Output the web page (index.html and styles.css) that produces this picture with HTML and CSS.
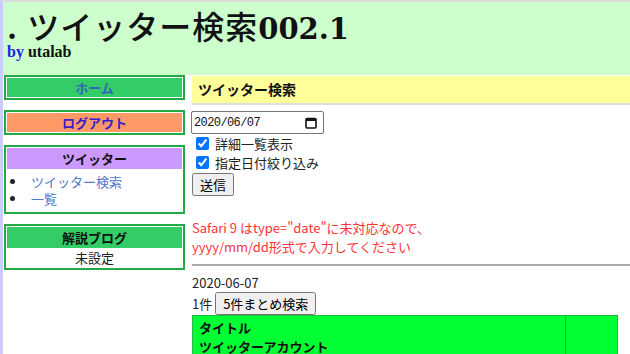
FILE: index.html
```html
<!DOCTYPE html>
<html lang="ja">
  <head>
    <meta charset="UTF-8" />
    <title>ツイッター検索002.1</title>
    <link rel="stylesheet" href="styles.css">
  </head>
  <body>
    <div class="header">
      <h1>. <span class="jp">ツイッター検索</span>002.1</h1>
      <div class="byline"><span class="by">by</span> utalab</div>
    </div>
    <div class="page">
      <div class="sidebar">
        <div class="box">
          <a class="btn home" href="#">ホーム</a>
        </div>
        <div class="box">
          <a class="btn logout" href="#">ログアウト</a>
        </div>
        <div class="box">
          <div class="box-title lavender">ツイッター</div>
          <ul class="menu">
            <li><a href="#">ツイッター検索</a></li>
            <li><a href="#">一覧</a></li>
          </ul>
        </div>
        <div class="box">
          <div class="box-title green">解説ブログ</div>
          <div class="box-text">未設定</div>
        </div>
      </div>
      <div class="main">
        <h2>ツイッター検索</h2>
        <form class="search">
          <div class="date-field">
            <input type="text" value="2020/06/07" />
            <svg width="12" height="12" viewBox="0 0 12 12">
              <rect x="1" y="1.5" width="10" height="9.5" rx="1" fill="none" stroke="#111" stroke-width="1.6" />
              <rect x="1" y="1.5" width="10" height="2.5" fill="#111" />
            </svg>
          </div>
          <label class="check"><input type="checkbox" checked /> 詳細一覧表示</label>
          <label class="check"><input type="checkbox" checked /> 指定日付絞り込み</label>
          <button type="button" class="submit">送信</button>
        </form>
        <p class="notice">Safari 9 はtype="date"に未対応なので、<br />yyyy/mm/dd形式で入力してください</p>
        <hr />
        <div class="day">2020-06-07</div>
        <div class="count">1件 <button type="button">5件まとめ検索</button></div>
        <table class="result">
          <tr>
            <th>タイトル<br />ツイッターアカウント</th>
            <td></td>
          </tr>
        </table>
      </div>
    </div>
  </body>
</html>
```

FILE: styles.css
```css
body {
  margin: 0;
  border-left: 3px solid #ccccff;
  border-top: 2px solid #dddddd;
  font-family: "Noto Sans CJK JP", "Noto Sans", sans-serif;
  font-size: 13px;
  color: #222;
  min-height: 100vh;
  box-sizing: border-box;
}

/* Header */
.header {
  background: #ccffcc;
  height: 73px;
  padding: 0 4px;
}

.header h1 {
  margin: 0;
  padding-top: 7px;
  height: 33px;
  font-family: "DejaVu Serif", "Noto Sans CJK JP", serif;
  font-size: 29px;
  font-weight: bold;
  line-height: 33px;
  color: #111;
}

.header h1 .jp {
  font-family: "Noto Sans CJK JP", sans-serif;
  font-size: 32px;
  font-weight: 500;
  letter-spacing: 1px;
}

.byline {
  font-family: "Liberation Serif", "Noto Sans CJK JP", serif;
  font-size: 16px;
  font-weight: bold;
  line-height: 16px;
  margin-top: 2px;
  color: #111;
}

.byline .by {
  color: #2222ee;
}

/* Layout */
.page {
  display: flex;
  gap: 7px;
}

.sidebar {
  width: 181px;
  flex: none;
  margin-left: 1px;
  display: flex;
  flex-direction: column;
  gap: 10px;
}

.box {
  border: 2px solid #22aa44;
  padding: 1px;
  background: #fff;
}

.btn {
  display: block;
  text-align: center;
  font-weight: bold;
  text-decoration: none;
  height: 19px;
  line-height: 19px;
  font-size: 13px;
}

.home {
  background: #33cc66;
  color: #3366bb;
}

.logout {
  background: #ff9966;
  color: #3322cc;
}

.box-title {
  text-align: center;
  font-weight: bold;
  height: 21px;
  line-height: 21px;
  color: #111;
}

.lavender {
  background: #cc99ff;
}

.green {
  background: #33cc66;
}

.menu {
  margin: 4px 0 4px;
  padding-left: 20px;
  line-height: 17px;
}

.menu li {
  padding-left: 4px;
}

.menu a {
  color: #5577cc;
  text-decoration: none;
}

.box-text {
  text-align: center;
  line-height: 19px;
}

/* Main */
.main {
  flex: 1;
  min-width: 0;
}

.main h2 {
  margin: 1px 0 0;
  background: #ffff99;
  border-bottom: 2px solid #dddddd;
  font-size: 14px;
  height: 27px;
  line-height: 27px;
  padding-left: 6px;
  color: #111;
}

.search {
  margin-top: 6px;
}

.date-field {
  display: flex;
  align-items: center;
  justify-content: space-between;
  width: 133px;
  height: 23px;
  box-sizing: border-box;
  border: 1px solid #767676;
  border-radius: 2px;
  padding: 0 6px 0 2px;
  margin-left: -1px;
}

.date-field input {
  border: none;
  outline: none;
  padding: 0;
  width: 90px;
  font-family: "Liberation Mono", "DejaVu Sans Mono", monospace;
  font-size: 12px;
  letter-spacing: -0.6px;
  color: #111;
  background: transparent;
}

.check {
  display: flex;
  align-items: center;
  gap: 6px;
  height: 19px;
  padding-left: 1px;
}

.check input {
  margin: 0 0 0 3px;
  width: 13px;
  height: 13px;
}

.submit {
  display: block;
  margin-top: 1px;
  height: 23px;
  padding: 0 6px;
  font-family: inherit;
  font-size: 13px;
}

.notice {
  margin: 22px 0 0;
  color: #ff3333;
  line-height: 19px;
  font-size: 13px;
}

.main hr {
  margin: 8px 0 0;
  border: none;
  border-top: 2px solid #aaaaaa;
}

.day {
  margin-top: 8px;
  line-height: 18px;
}

.count {
  line-height: 22px;
}

.count button {
  height: 23px;
  font-family: inherit;
  font-size: 13px;
  padding: 0 6px;
}

.result {
  width: 426px;
  border-collapse: collapse;
  background: #00ff33;
  border: 1px solid #22bb44;
}

.result th {
  text-align: left;
  padding: 2px 6px;
  line-height: 19px;
  width: 360px;
  border-right: 1px solid #22aa44;
  color: #111;
}
```
